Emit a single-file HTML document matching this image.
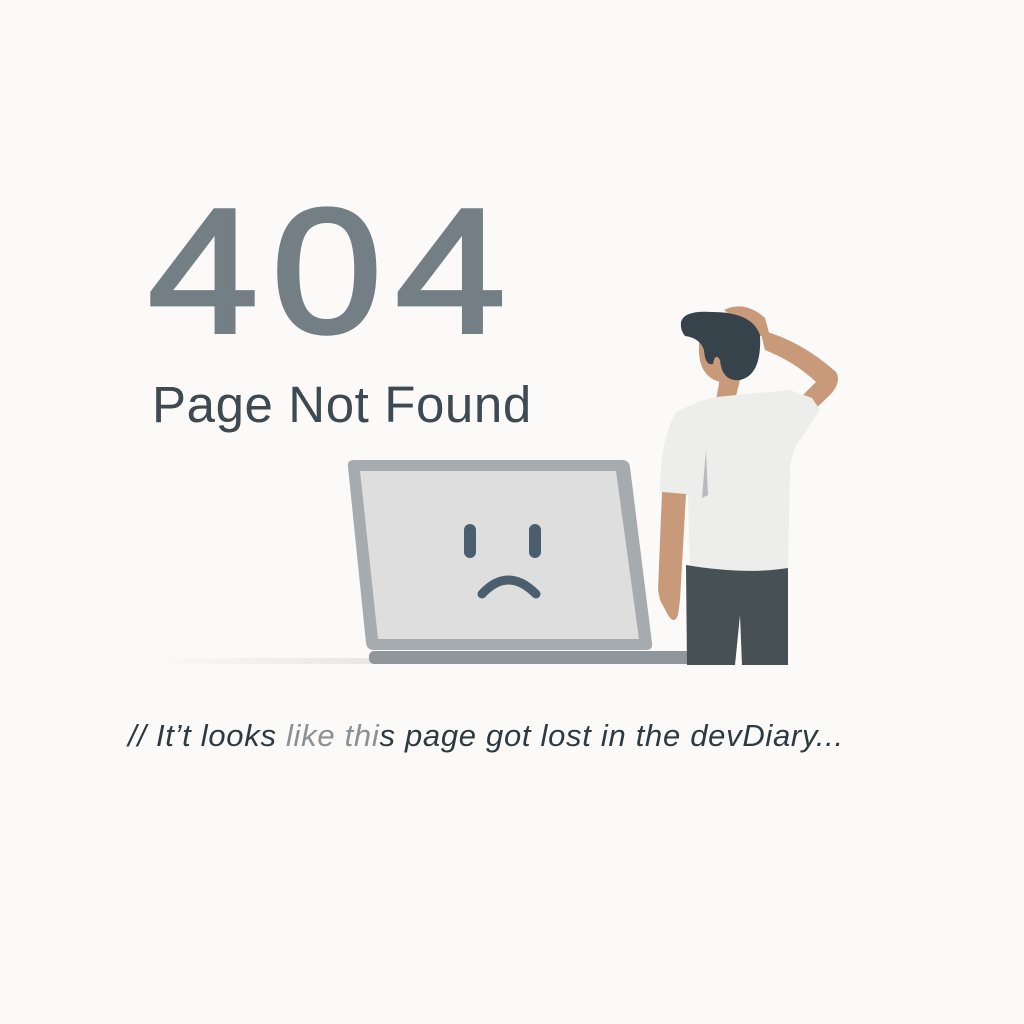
<!DOCTYPE html>
<html><head><style>
html,body{margin:0;padding:0;background:#fbfaf8;width:1024px;height:1024px;overflow:hidden;font-family:"Liberation Sans",sans-serif}
.t404{position:absolute;left:148px;top:183px;font-size:177px;color:#737e85;letter-spacing:12px;line-height:1;-webkit-text-stroke:4px #737e85;transform:scaleX(1.12);transform-origin:0 0}
.pnf{position:absolute;left:152px;top:379px;font-size:51px;color:#3d4a52;line-height:1;letter-spacing:0.6px}
.tag{position:absolute;left:128px;top:720px;font-size:31px;font-style:italic;color:#2e3a42;line-height:1;white-space:nowrap;letter-spacing:0.7px}
.tag span{color:#8a9096}
svg{position:absolute;left:0;top:0}
</style></head><body>
<div class="t404">404</div>
<div class="pnf">Page Not Found</div>
<svg width="1024" height="1024">
<defs><linearGradient id="sh" x1="0" x2="1"><stop offset="0" stop-color="#fbfaf8"/><stop offset="1" stop-color="#e6e6e6"/></linearGradient></defs>
<rect x="150" y="658" width="230" height="6" fill="url(#sh)"/>
<path d="M354 460 L622 460 Q629 460 630 467 L652 643 Q653 650 646 650 L374 650 Q367 650 366 643 L348 467 Q347 460 354 460Z" fill="#a6abaf"/>
<path d="M360 471 L616 471 L639 639 L378 639Z" fill="#dedede"/>
<rect x="369" y="651" width="330" height="13" rx="5" fill="#8f979c"/>
<rect x="464" y="524" width="12" height="34" rx="6" fill="#4a5e6e"/>
<rect x="529" y="524" width="12" height="34" rx="6" fill="#4a5e6e"/>
<path d="M482 594 Q508 566 536 594" fill="none" stroke="#4a5e6e" stroke-width="9" stroke-linecap="round"/>
<!-- person -->
<path d="M720 378 L716 400 L735 400 L742 372Z" fill="#c99a7a"/>
<path d="M700 335 Q694 375 720 382 Q742 382 748 350 L735 322Z" fill="#c99a7a"/>
<path d="M760 330 Q800 340 836 372 Q842 382 830 395 L812 412 L800 398 L816 382 Q795 362 765 350Z" fill="#c99a7a"/>
<path d="M724 310 Q745 300 765 318 L770 336 L755 336Z" fill="#c99a7a"/>
<path d="M681 322 Q684 310 712 312 Q752 312 760 335 Q762 375 740 380 Q722 382 720 360 Q715 352 713 364 Q705 366 704 350 Q700 338 685 336 Q680 330 681 322Z" fill="#36434a"/>
<path d="M676 412 Q700 400 716 397 L790 390 L812 398 L820 410 L800 440 Q792 450 790 470 L788 572 Q745 578 690 570 L688 495 L660 492 Q660 440 676 412Z" fill="#ededeb"/>
<path d="M706 450 L708 495 L702 498Z" fill="#b7bbbf"/>
<path d="M662 492 L686 494 L680 600 L678 615 Q674 625 668 615 L660 600 L658 590Z" fill="#c99a7a"/>
<path d="M686 565 Q745 575 788 568 L788 665 L742 665 L740 615 L735 665 L687 665Z" fill="#465055"/>
</svg>
<div class="tag">// It’t looks <span>like thi</span>s page got lost in the devDiary...</div>
</body></html>
